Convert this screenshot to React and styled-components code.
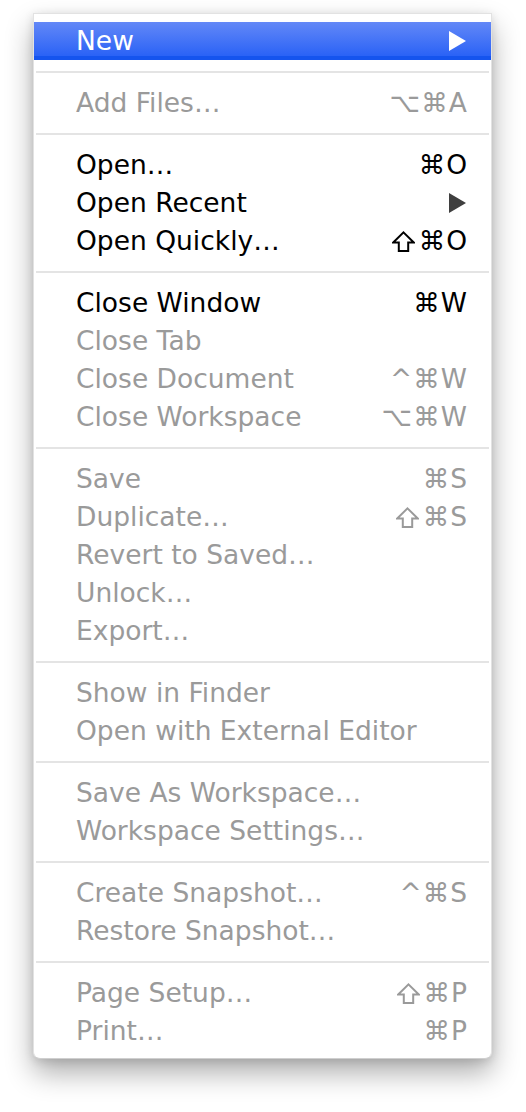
import React from 'react';
import styled, { createGlobalStyle } from 'styled-components';

const GlobalStyle = createGlobalStyle`
    html, body {
        margin: 0;
        padding: 0;
        background: #fff;
    }
`

const Page = styled.div`
    padding: 13px 0 0 33px;
    height: 1112px;
    box-sizing: border-box;
`
const Menu = styled.div`
    width: 459px;
    box-sizing: border-box;
    padding: 8px 0;
    background: #fff;
    border: 1px solid #e2e2e2;
    border-bottom-color: #cfcfcf;
    border-radius: 0 0 7px 7px;
    box-shadow: 0 14px 28px rgba(0, 0, 0, 0.32), 0 2px 10px rgba(0, 0, 0, 0.12);
    font-family: "DejaVu Sans", "Lucida Grande", Verdana, sans-serif;
    font-size: 26.5px;
`
const Row = styled.div`
    display: flex;
    align-items: center;
    justify-content: space-between;
    height: 38px;
    padding: 0 24px 0 42px;
    color: ${p => p.$active ? '#fff' : p.$disabled ? '#9a9a9a' : '#000'};
    background: ${p => p.$active
        ? 'linear-gradient(#6388f7, #2a62f6 90%, #1554ee 90%)'
        : 'transparent'};
    white-space: nowrap;
`
const Label = styled.span`
    line-height: 38px;
`
const Shortcut = styled.span`
    display: flex;
    align-items: center;
    gap: 4px;
    line-height: 38px;
    letter-spacing: 1px;
    margin-right: -1px;
`
const ShiftIcon = styled.svg`
    flex-shrink: 0;
    width: 23px;
    height: 21px;
    margin-top: 1px;
    fill: none;
    stroke: currentColor;
    stroke-width: 2;
    stroke-linejoin: miter;
`
const Arrow = styled.span`
    width: 0;
    height: 0;
    margin-right: 1px;
    border-top: 10px solid transparent;
    border-bottom: 10px solid transparent;
    border-left: 17px solid ${p => p.$active ? '#fff' : '#3f3f3f'};
`
const Separator = styled.div`
    height: 24px;
    display: flex;
    align-items: center;
    padding: 0 2px;

    &::after {
        content: '';
        flex: 1;
        height: 2px;
        background: #e4e4e4;
    }
`

const groups = [
    [{ label: 'New', submenu: true, active: true }],
    [{ label: 'Add Files…', key: '⌥⌘A', disabled: true }],
    [
        { label: 'Open…', key: '⌘O' },
        { label: 'Open Recent', submenu: true },
        { label: 'Open Quickly…', key: '⌘O', shift: true },
    ],
    [
        { label: 'Close Window', key: '⌘W' },
        { label: 'Close Tab', disabled: true },
        { label: 'Close Document', key: '^⌘W', disabled: true },
        { label: 'Close Workspace', key: '⌥⌘W', disabled: true },
    ],
    [
        { label: 'Save', key: '⌘S', disabled: true },
        { label: 'Duplicate…', key: '⌘S', shift: true, disabled: true },
        { label: 'Revert to Saved…', disabled: true },
        { label: 'Unlock…', disabled: true },
        { label: 'Export…', disabled: true },
    ],
    [
        { label: 'Show in Finder', disabled: true },
        { label: 'Open with External Editor', disabled: true },
    ],
    [
        { label: 'Save As Workspace…', disabled: true },
        { label: 'Workspace Settings…', disabled: true },
    ],
    [
        { label: 'Create Snapshot…', key: '^⌘S', disabled: true },
        { label: 'Restore Snapshot…', disabled: true },
    ],
    [
        { label: 'Page Setup…', key: '⌘P', shift: true, disabled: true },
        { label: 'Print…', key: '⌘P', disabled: true },
    ],
]

const App = () => {
    return (
        <Page>
            <GlobalStyle />
            <Menu>
                {groups.map((items, i) => (
                    <React.Fragment key={i}>
                        {i > 0 && <Separator />}
                        {items.map(item => (
                            <Row key={item.label} $active={item.active} $disabled={item.disabled}>
                                <Label>{item.label}</Label>
                                {item.submenu && <Arrow $active={item.active} />}
                                {item.key && (
                                    <Shortcut>
                                        {item.shift && (
                                            <ShiftIcon viewBox="0 0 23 21">
                                                <path d="M11.5 1.4 L21.8 11.5 H16.2 V20 H6.8 V11.5 H1.2 Z" />
                                            </ShiftIcon>
                                        )}
                                        <span>{item.key}</span>
                                    </Shortcut>
                                )}
                            </Row>
                        ))}
                    </React.Fragment>
                ))}
            </Menu>
        </Page>
    );
}

export default App;
